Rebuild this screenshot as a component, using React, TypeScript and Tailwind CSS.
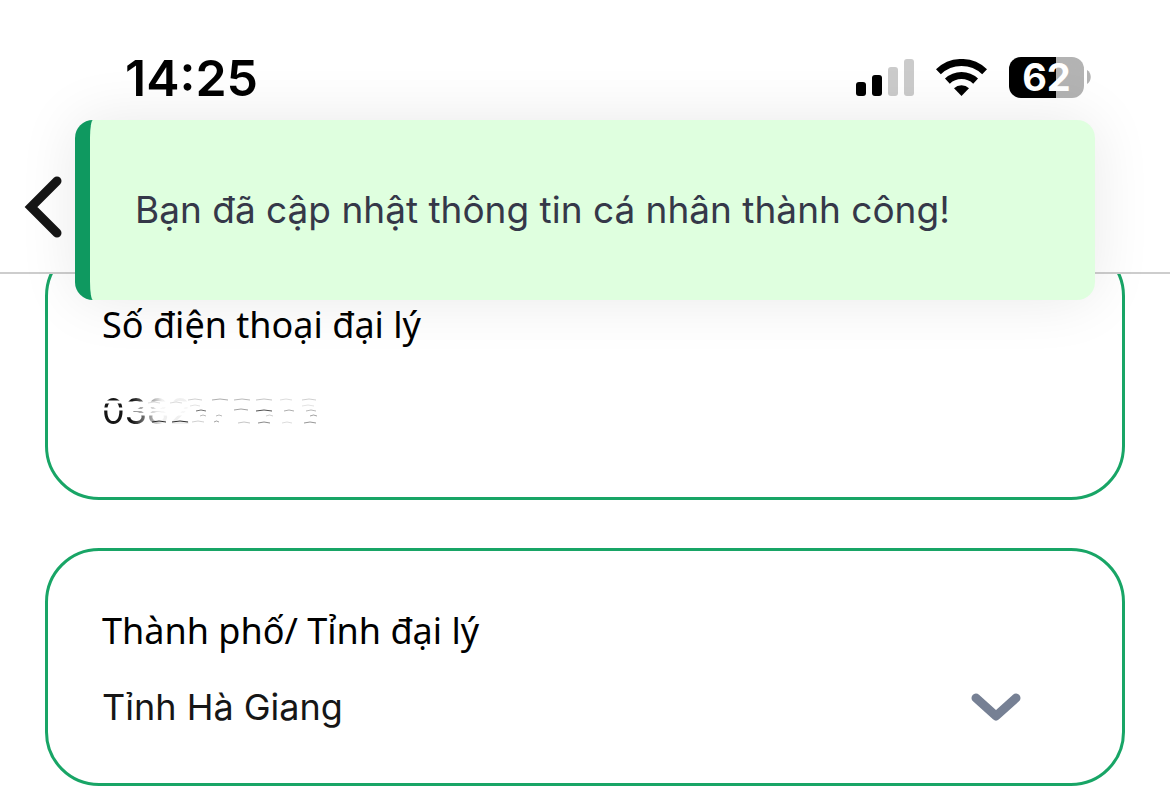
import { useState } from "react";

const bars = [
  { x: 0, height: 14, fill: "#000" },
  { x: 16, height: 21, fill: "#000" },
  { x: 32, height: 29, fill: "#cbcbcb" },
  { x: 48, height: 37, fill: "#cbcbcb" },
];

// what is left of the rubbed-out digits: [x, y, width, opacity]
const smudges = [
  [46, 6, 12, 0.15], [68, 6, 12, 0.15], [50, 25, 14, 0.9], [70, 25, 16, 0.9],
  [86, 3, 14, 0.2], [110, 3, 16, 0.35], [132, 3, 16, 0.3], [154, 3, 16, 0.25], [178, 3, 12, 0.15], [200, 3, 14, 0.2],
  [88, 9, 10, 0.12], [200, 9, 12, 0.12],
  [94, 14, 10, 0.6], [132, 13, 14, 0.4], [154, 14, 16, 0.75], [182, 14, 10, 0.35], [204, 14, 10, 0.3],
  [98, 19, 6, 0.3], [114, 19, 6, 0.3], [164, 19, 7, 0.2], [208, 19, 7, 0.4],
  [90, 25, 12, 0.2], [112, 25, 5, 0.4], [136, 26, 12, 0.25], [156, 26, 12, 0.5], [180, 26, 10, 0.15], [202, 26, 12, 0.45],
];

function StatusBar() {
  return (
    <div className="flex items-center justify-between pt-12 pr-[79px] pl-[125px]">
      <span className="text-[50px] leading-[60px] font-semibold text-black">14:25</span>
      <div className="flex items-center gap-[22px] pb-[2px]">
        <svg width="58" height="37" viewBox="0 0 58 37" aria-hidden="true">
          {bars.map((b) => (
            <rect key={b.x} x={b.x} y={37 - b.height} width="10" height={b.height} rx="3" fill={b.fill} />
          ))}
        </svg>
        <svg width="51" height="37" viewBox="0 0 51 37" aria-hidden="true">
          <g fill="none" stroke="#000" strokeWidth="7">
            <path d="M2.4 12.7A33.5 33.5 0 0 1 48.6 12.7" />
            <path d="M11.4 22.1A20.5 20.5 0 0 1 39.6 22.1" />
          </g>
          <path d="M25.5 37L18 29.3A11 11 0 0 1 33 29.3Z" />
        </svg>
        <div className="flex items-center gap-[3px]">
          <div className="flex h-[41px] w-[75px] items-center justify-center rounded-xl bg-linear-to-r from-black from-[63%] to-[#b3b3b3] to-[63%] text-[38px] leading-[41px] font-bold text-white">
            62
          </div>
          <svg width="4" height="14" viewBox="0 0 4 14" aria-hidden="true">
            <path d="M0 0C5 3 5 11 0 14Z" fill="#b3b3b3" />
          </svg>
        </div>
      </div>
    </div>
  );
}

function Toast({ message }: { message: string }) {
  return (
    <div
      role="status"
      className="absolute inset-x-[75px] top-[120px] z-20 flex h-[180px] items-center rounded-[18px] border-l-[15px] border-[#0f9960] bg-[#dfffdf] px-[45px] text-[37px] leading-[44px] text-[#353849] shadow-[0_0_60px_rgba(0,0,0,0.09)]"
    >
      {message}
    </div>
  );
}

export default function App() {
  const [phone, setPhone] = useState("0382");
  const [province, setProvince] = useState("Tỉnh Hà Giang");

  return (
    <div className="relative min-h-screen overflow-hidden bg-white font-['Inter',sans-serif]">
      <header className="relative z-10 border-b-2 border-[#cdcdcd] bg-white pb-8">
        <StatusBar />
        <div className="mt-[68px] flex pl-6">
          <button type="button" aria-label="Quay lại" className="cursor-pointer">
            <svg width="40" height="64" viewBox="0 0 40 64" fill="none" stroke="#161616" strokeWidth="9" strokeLinecap="round">
              <path d="M33 5L7 31L33 57" />
            </svg>
          </button>
        </div>
      </header>

      <Toast message="Bạn đã cập nhật thông tin cá nhân thành công!" />

      <main className="-mt-8 flex flex-col gap-12 px-[45px] pb-6">
        <div className="rounded-[54px] border-3 border-[#18a566] px-[54px] pt-14 pb-16">
          <label htmlFor="phone" className="block font-['Noto_Sans',sans-serif] text-[36px] leading-[48px] text-black">
            Số điện thoại đại lý
          </label>
          <div className="relative mt-10">
            <input
              id="phone"
              type="tel"
              value={phone}
              onChange={(e) => setPhone(e.target.value)}
              className="block w-full bg-linear-to-r from-[#161616] from-[30px] to-[#16161611] to-[60px] bg-clip-text text-[36px] leading-[44px] text-transparent outline-none"
            />
            <svg className="pointer-events-none absolute top-2 left-0" width="220" height="30" viewBox="0 0 220 30" aria-hidden="true">
              <g fill="none" stroke="#fff" strokeWidth="3">
                <path d="M0 5H24M20 6H90M0 12H30M24 9H90M24 13H90M26 17H86" />
              </g>
              {smudges.map(([x, y, w, o]) => (
                <path key={`${x}-${y}`} d={`M${x} ${y}q${w / 2} -2 ${w} 0`} fill="none" stroke="#161616" strokeOpacity={o} />
              ))}
            </svg>
          </div>
        </div>

        <div className="rounded-[54px] border-3 border-[#18a566] px-[54px] pt-14 pb-[54px]">
          <label htmlFor="province" className="block font-['Noto_Sans',sans-serif] text-[36px] leading-[48px] text-black">
            Thành phố/ Tỉnh đại lý
          </label>
          <div className="mt-[30px] grid items-center">
            <select
              id="province"
              value={province}
              onChange={(e) => setProvince(e.target.value)}
              className="col-start-1 row-start-1 w-full appearance-none bg-transparent text-[36px] leading-[44px] text-[#161616] outline-none"
            >
              <option>Tỉnh Hà Giang</option>
            </select>
            <svg
              className="pointer-events-none col-start-1 row-start-1 mr-[47px] justify-self-end"
              width="50"
              height="28"
              viewBox="0 0 50 28"
              fill="none"
              stroke="#768094"
              strokeWidth="9"
              strokeLinecap="round"
              strokeLinejoin="round"
              aria-hidden="true"
            >
              <path d="M5 5L25 23L45 5" />
            </svg>
          </div>
        </div>
      </main>
    </div>
  );
}
